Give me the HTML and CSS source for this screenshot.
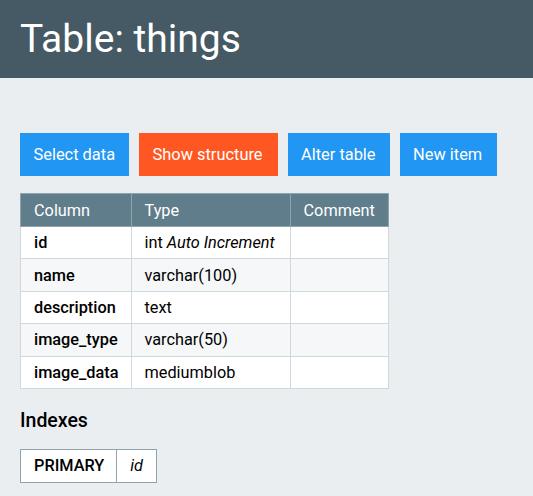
FILE: index.html
```html
<!DOCTYPE html>
<html>
<head>
<meta charset="utf-8">
<link rel="stylesheet" href="styles.css">
</head>
<body>
<header class="top"><h1 class="title">Table: things</h1></header>
<main class="content">
  <nav class="actions">
    <a class="btn">Select data</a>
    <a class="btn btn-active">Show structure</a>
    <a class="btn">Alter table</a>
    <a class="btn">New item</a>
  </nav>
  <table class="grid">
    <thead><tr><th class="c1">Column</th><th class="c2">Type</th><th class="c3">Comment</th></tr></thead>
    <tbody>
      <tr><th>id</th><td>int <i>Auto Increment</i></td><td></td></tr>
      <tr><th>name</th><td>varchar(100)</td><td></td></tr>
      <tr><th>description</th><td>text</td><td></td></tr>
      <tr><th>image_type</th><td>varchar(50)</td><td></td></tr>
      <tr><th>image_data</th><td>mediumblob</td><td></td></tr>
    </tbody>
  </table>
  <h2 class="sub">Indexes</h2>
  <table class="grid idx">
    <tbody><tr><th class="i1">PRIMARY</th><td class="i2"><i>id</i></td></tr></tbody>
  </table>
</main>
</body>
</html>
```
FILE: styles.css
```css
html, body { margin: 0; padding: 0; }
body {
  background: #eaeef1;
  font-family: Roboto, "Liberation Sans", sans-serif;
  color: #000;
  width: 533px;
  height: 496px;
  overflow: hidden;
}
.top {
  background: #455a64;
  height: 78px;
  padding: 0 20px;
  display: flex;
  align-items: center;
}
.title {
  margin: 0;
  color: #fff;
  font-weight: 400;
  font-size: 39px;
  line-height: 44px;
}
.content { padding: 55px 20px 0; }
.actions { display: flex; gap: 10px; margin-bottom: 17px; }
.btn {
  display: block;
  background: #2196f3;
  color: #fff;
  font-size: 16.4px;
  line-height: 19px;
  padding: 12px 14px 12px 13.5px;
}
.btn-active { background: #ff5722; }
.btn-active, .btn:last-child { padding-right: 15px; }
.grid {
  border-collapse: collapse;
  border: 1px solid #90a4ae;
  font-size: 16.3px;
  background: #fff;
}
.grid th, .grid td {
  border: 1px solid #cfd8dc;
  padding: 0 13px;
  line-height: 19px;
  text-align: left;
  vertical-align: middle;
}
.grid tbody th { font-weight: 500; padding-right: 12px; }
.grid tbody td { font-weight: 400; }
.grid thead tr { height: 33px; }
.grid thead th {
  background: #607d8b;
  color: #fff;
  font-weight: 400;
  border-color: #90a4ae;
}
.grid thead .c1 { padding-right: 12px; }
.grid tbody tr { height: 32.4px; }
.grid tbody tr:nth-child(even) { background: #f5f7f8; }
.c1 { width: 83px; }
.c2 { width: 132px; }
.c3 { width: 68px; }
.sub {
  font-size: 19.5px;
  font-weight: 500;
  margin: 20px 0 16px;
  line-height: 24px;
}
.idx { border-color: #90a4ae; }
.idx tbody tr { height: 33px; }
.idx th, .idx td { border-color: #90a4ae; }
.idx .i1 { width: 68px; }
.idx .i2 { width: 12px; }
.idx tbody th { font-weight: 500; }
```
